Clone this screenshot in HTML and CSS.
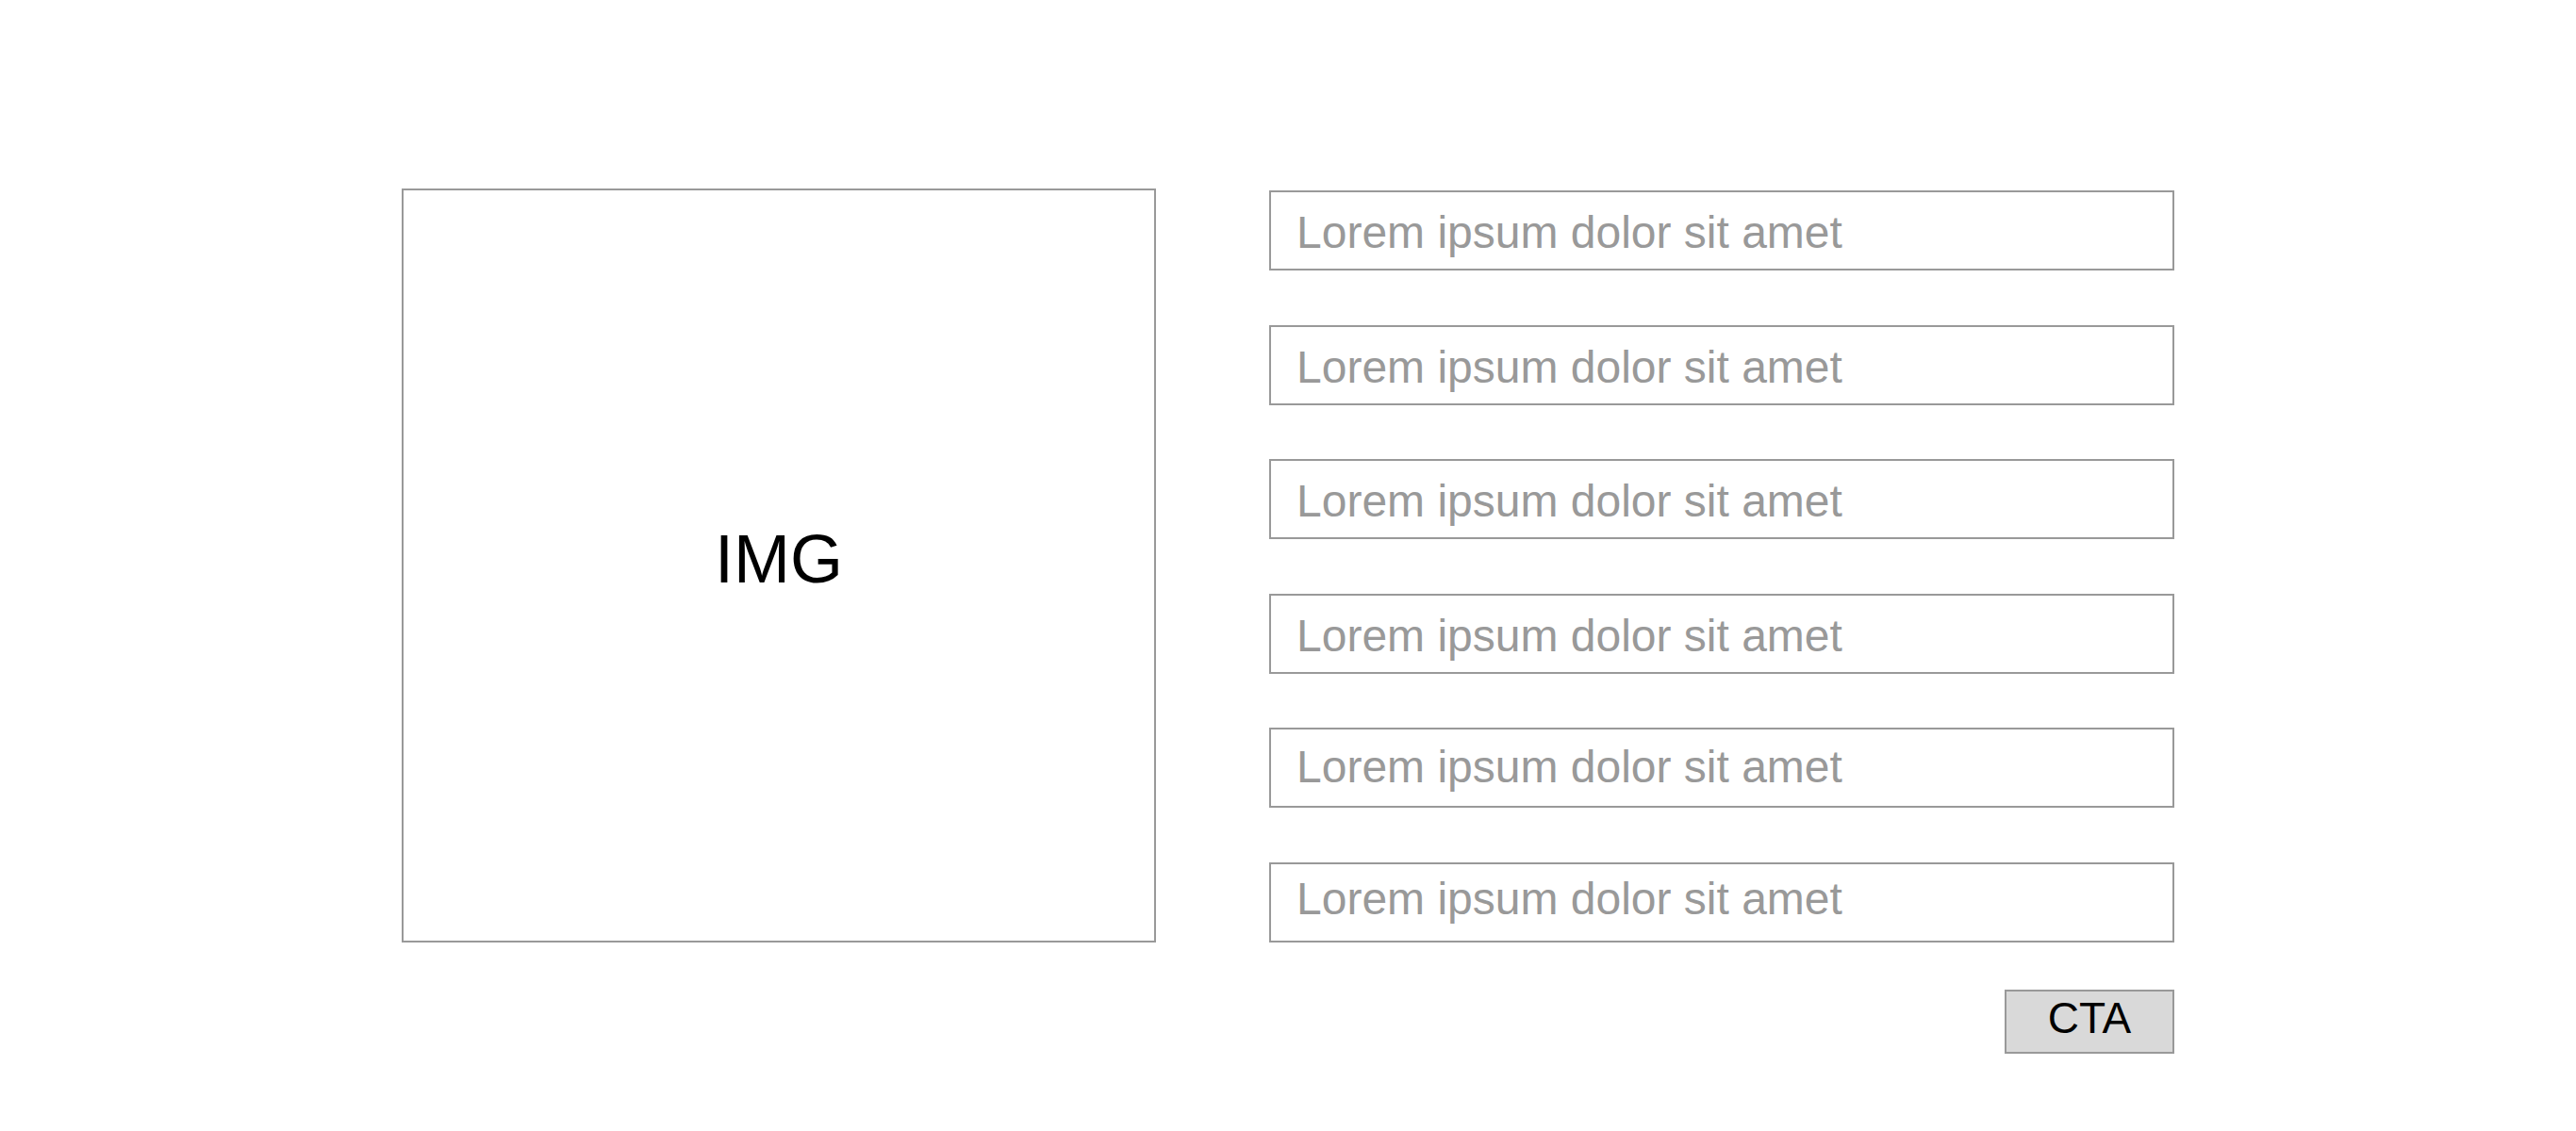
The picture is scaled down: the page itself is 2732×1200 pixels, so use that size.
FILE: index.html
```html
<!DOCTYPE html>
<html lang="en">
<head>
<meta charset="utf-8">
<title>Wireframe</title>
<link rel="stylesheet" href="styles.css">
</head>
<body>
<main class="layout">
  <div class="img-box"><span class="img-label">IMG</span></div>
  <div class="side">
    <div class="fields">
      <div class="field">Lorem ipsum dolor sit amet</div>
      <div class="field">Lorem ipsum dolor sit amet</div>
      <div class="field">Lorem ipsum dolor sit amet</div>
      <div class="field">Lorem ipsum dolor sit amet</div>
      <div class="field field-up">Lorem ipsum dolor sit amet</div>
      <div class="field field-upper">Lorem ipsum dolor sit amet</div>
    </div>
    <div class="cta">CTA</div>
  </div>
</main>
</body>
</html>
```
FILE: styles.css
```css
html, body {
  margin: 0;
  padding: 0;
  background: #ffffff;
}
body {
  font-family: "Liberation Sans", Arial, Helvetica, sans-serif;
  color: #000;
}
.layout {
  display: flex;
  justify-content: center;
  align-items: flex-start;
  gap: 120px;
  padding-top: 200px;
}
.img-box {
  box-sizing: border-box;
  width: 800px;
  height: 800px;
  border: 2px solid #999999;
  display: flex;
  align-items: center;
  justify-content: center;
}
.img-label {
  font-size: 72px;
  line-height: 1;
  padding-bottom: 14px;
}
.side {
  width: 960px;
  display: flex;
  flex-direction: column;
}
.fields {
  box-sizing: border-box;
  height: 800px;
  padding-top: 2px;
  display: flex;
  flex-direction: column;
  justify-content: space-between;
}
.field {
  box-sizing: border-box;
  height: 85px;
  border: 2px solid #999999;
  display: flex;
  align-items: center;
  padding: 4px 27px 0;
  font-size: 48px;
  color: #999999;
  white-space: nowrap;
}
.field-up {
  padding: 0 27px 2px;
}
.field-upper {
  padding: 0 27px 8px;
}
.cta {
  box-sizing: border-box;
  align-self: flex-end;
  margin-top: 50px;
  width: 180px;
  height: 68px;
  border: 2px solid #999999;
  background: #d9d9d9;
  display: flex;
  align-items: center;
  justify-content: center;
  font-size: 46px;
  padding-bottom: 8px;
}
```
